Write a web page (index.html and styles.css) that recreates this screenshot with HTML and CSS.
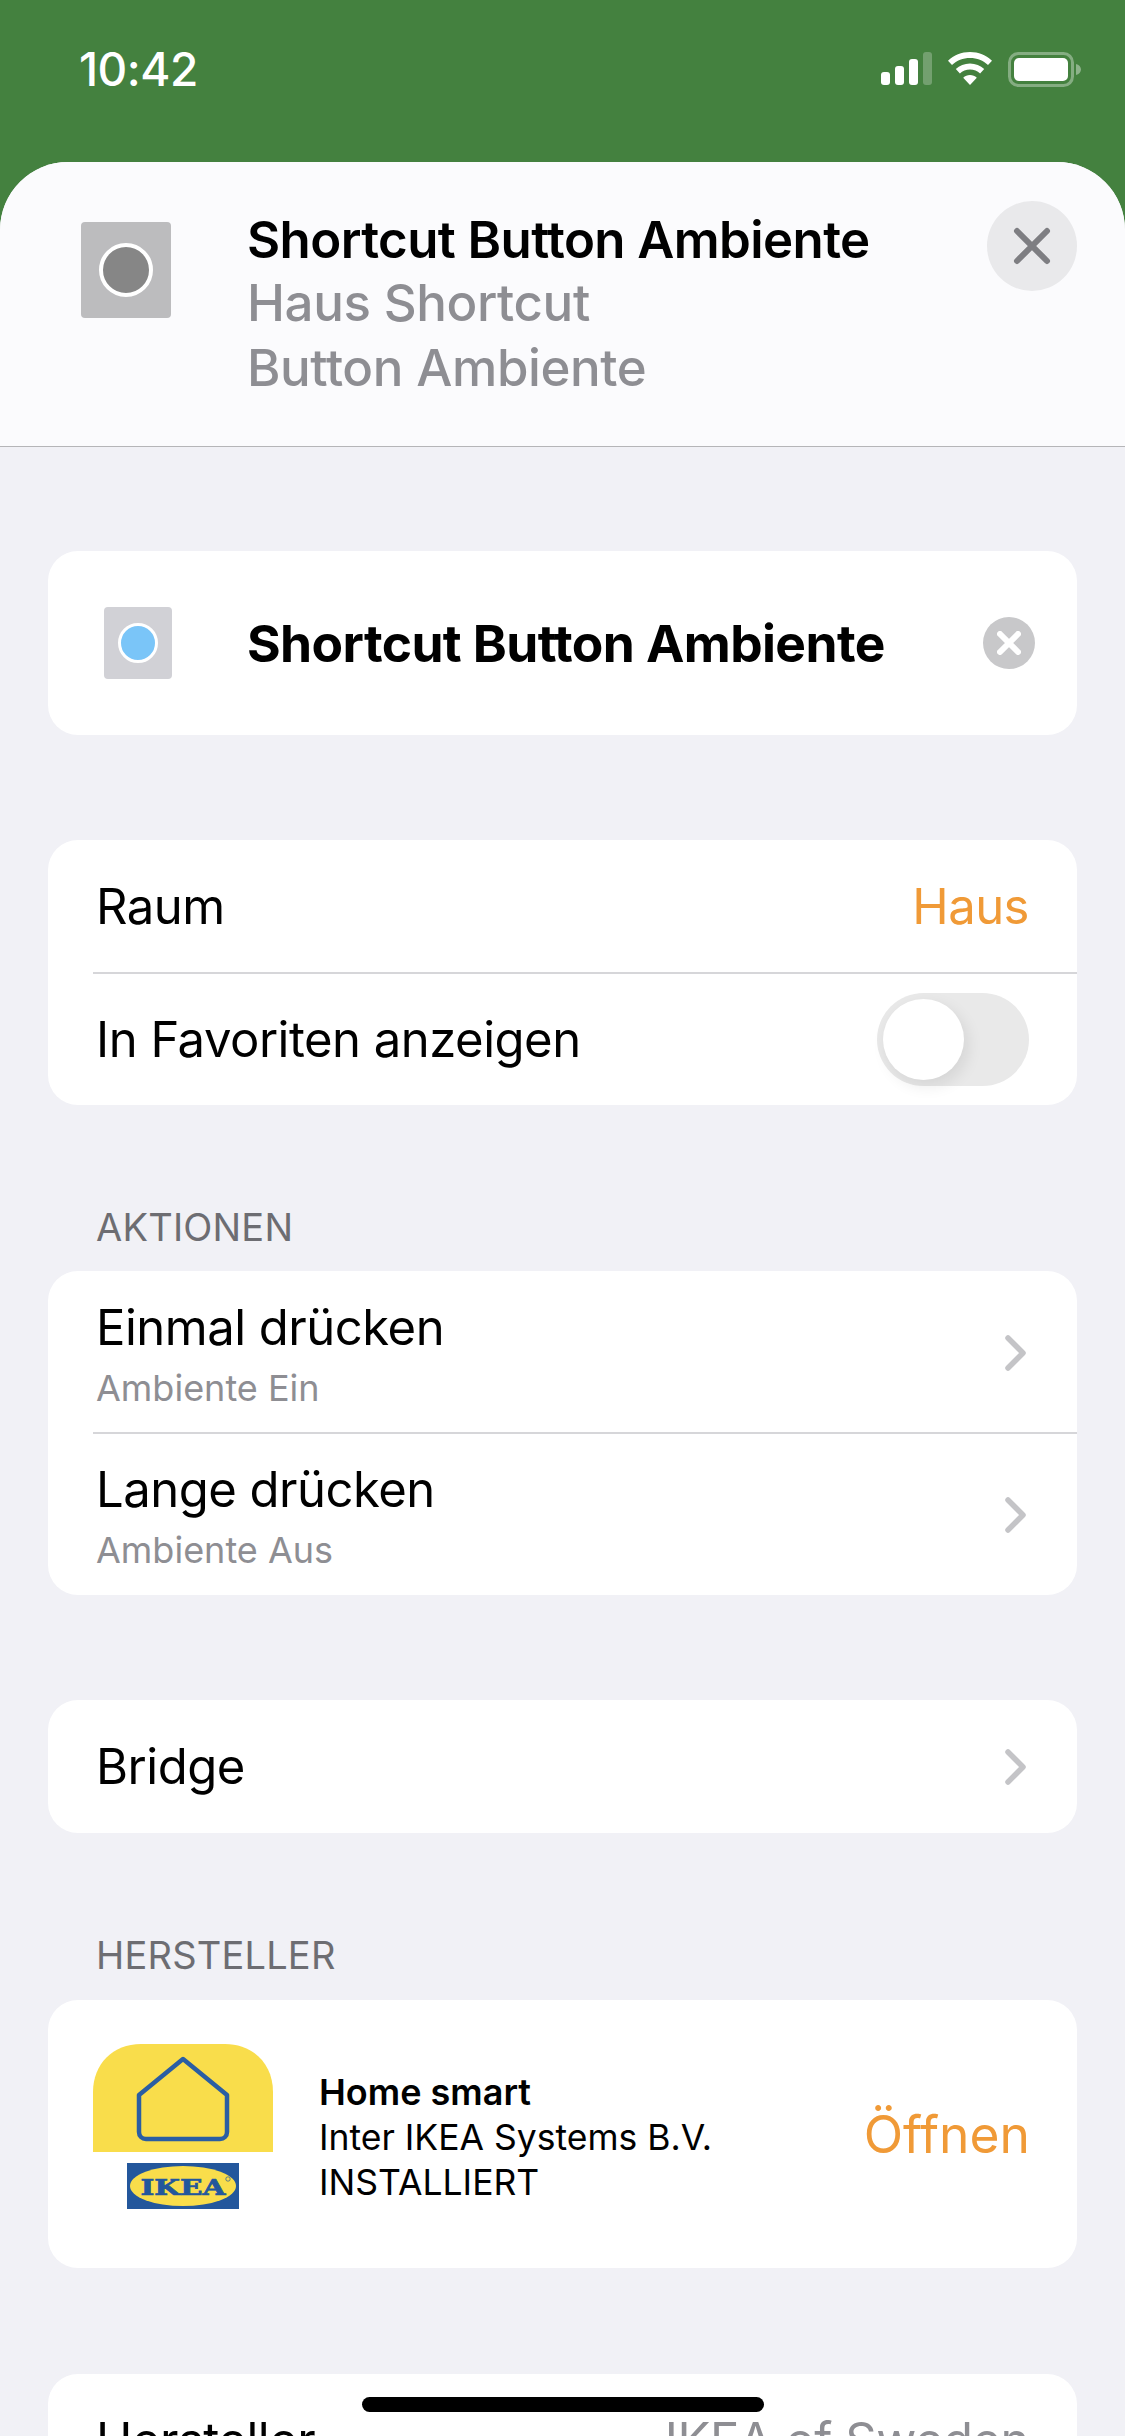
FILE: index.html
```html
<!DOCTYPE html>
<html lang="de">

<head>
    <meta charset="utf-8">
    <title>Shortcut Button Ambiente</title>
    <link rel="stylesheet" href="styles.css">
</head>

<body>
    <div class="screen">

        <header class="status-bar">
            <span class="time">10:42</span>
            <div class="status-icons">
                <svg class="signal" width="52" height="33" viewBox="0 0 52 33">
                    <rect x="0" y="20" width="9" height="13" rx="3" fill="#fff" />
                    <rect x="14" y="14" width="9" height="19" rx="3" fill="#fff" />
                    <rect x="28" y="7" width="9" height="26" rx="3" fill="#fff" />
                    <rect x="42" y="0" width="9" height="33" rx="3" fill="#fff" opacity="0.25" />
                </svg>
                <svg class="wifi" width="46" height="34" viewBox="0 0 46 34">
                    <path d="M23 0C14.500 0 6.800 3.300 1 8.700L5 13C9.700 8.600 16 6 23 6s13.300 2.600 18 7l4-4.300C39.200 3.300 31.500 0 23 0z" fill="#fff" />
                    <path d="M23 11.500c-5.500 0-10.500 2.100-14.200 5.600l4.100 4.400C15.500 19 19.100 17.500 23 17.500s7.500 1.500 10.100 4l4.100-4.400C33.500 13.600 28.500 11.500 23 11.500z" fill="#fff" />
                    <path d="M23 23c-2.600 0-5 1-6.800 2.700L23 33l6.800-7.300C28 24 25.600 23 23 23z" fill="#fff" />
                </svg>
                <svg class="battery" width="74" height="35" viewBox="0 0 74 35">
                    <rect x="1.500" y="1.500" width="63" height="32" rx="9" fill="none" stroke="#fff" stroke-width="3" opacity="0.35" />
                    <rect x="6" y="6" width="54" height="23" rx="5" fill="#fff" />
                    <path d="M68 12c3 .8 5 3 5 5.500S71 22.200 68 23z" fill="#fff" opacity="0.4" />
                </svg>
            </div>
        </header>

        <div class="sheet">

            <div class="sheet-head">
                <div class="tile tile-large"><span class="dot dot-large"></span></div>
                <div class="sheet-titles">
                    <div class="sheet-title">Shortcut Button Ambiente</div>
                    <div class="sheet-sub">Haus Shortcut<br>Button Ambiente</div>
                </div>
                <button class="close-btn">
                    <svg width="38" height="38" viewBox="0 0 38 38">
                        <path d="M4 4l30 30M34 4L4 34" stroke="#7e7e82" stroke-width="6" stroke-linecap="round" />
                    </svg>
                </button>
            </div>

            <main class="content">

                <section class="card name-card">
                    <div class="tile tile-small"><span class="dot dot-small"></span></div>
                    <div class="name-text">Shortcut Button Ambiente</div>
                    <span class="clear-btn">
                        <svg width="24" height="24" viewBox="0 0 24 24">
                            <path d="M3 3l18 18M21 3L3 21" stroke="#fff" stroke-width="6" stroke-linecap="round" />
                        </svg>
                    </span>
                </section>

                <section class="card group-room">
                    <div class="row">
                        <span>Raum</span>
                        <span class="orange">Haus</span>
                    </div>
                    <div class="row">
                        <span>In Favoriten anzeigen</span>
                        <span class="toggle"><span class="knob"></span></span>
                    </div>
                </section>

                <h2 class="section-label label-actions">AKTIONEN</h2>
                <section class="card">
                    <div class="row row-tall">
                        <div>
                            <div>Einmal drücken</div>
                            <div class="row-sub">Ambiente Ein</div>
                        </div>
                        <svg class="chevron" width="24" height="38" viewBox="0 0 24 38">
                            <path d="M4 4l15 15L4 34" fill="none" stroke="#c4c4c7" stroke-width="5.500" stroke-linecap="round" stroke-linejoin="round" />
                        </svg>
                    </div>
                    <div class="row row-tall">
                        <div>
                            <div>Lange drücken</div>
                            <div class="row-sub">Ambiente Aus</div>
                        </div>
                        <svg class="chevron" width="24" height="38" viewBox="0 0 24 38">
                            <path d="M4 4l15 15L4 34" fill="none" stroke="#c4c4c7" stroke-width="5.500" stroke-linecap="round" stroke-linejoin="round" />
                        </svg>
                    </div>
                </section>

                <section class="card group-bridge">
                    <div class="row">
                        <span>Bridge</span>
                        <svg class="chevron" width="24" height="38" viewBox="0 0 24 38">
                            <path d="M4 4l15 15L4 34" fill="none" stroke="#c4c4c7" stroke-width="5.500" stroke-linecap="round" stroke-linejoin="round" />
                        </svg>
                    </div>
                </section>

                <h2 class="section-label label-maker">HERSTELLER</h2>
                <section class="card app-card">
                    <div class="app-logo">
                        <svg class="app-icon" width="180" height="108" viewBox="0 0 180 108">
                            <path d="M0 108V48C0 20 20 0 48 0h84c28 0 48 20 48 48v60z" fill="#f9dd4b" />
                            <path d="M90 15L46 51v37c0 4 3 7 7 7h74c4 0 7-3 7-7V51z" fill="none" stroke="#2a5ea3" stroke-width="4.500" stroke-linejoin="round" />
                        </svg>
                        <svg class="ikea" width="112" height="46" viewBox="0 0 112 46">
                            <rect width="112" height="46" fill="#23579c" />
                            <ellipse cx="56" cy="23" rx="53" ry="20" fill="#f9dd4b" />
                            <text x="56" y="31.500" text-anchor="middle" textLength="85" lengthAdjust="spacingAndGlyphs" class="ikea-text">IKEA</text>
                            <circle cx="101" cy="16" r="2.200" fill="none" stroke="#23579c" stroke-width="0.700" />
                        </svg>
                    </div>
                    <div class="app-text">
                        <div class="app-name">Home smart</div>
                        <div>Inter IKEA Systems B.V.</div>
                        <div>INSTALLIERT</div>
                    </div>
                    <span class="orange app-open">Öffnen</span>
                </section>

                <section class="card group-last">
                    <div class="row">
                        <span>Hersteller</span>
                        <span class="grey">IKEA of Sweden</span>
                    </div>
                </section>

            </main>
        </div>

        <div class="home-bar"></div>
    </div>
</body>

</html>
```

FILE: styles.css
```css
* {
    box-sizing: border-box;
}

html,
body {
    margin: 0;
    padding: 0;
}

body {
    font-family: Inter, "Liberation Sans", sans-serif;
    color: #000;
}

.screen {
    position: relative;
    width: 1125px;
    height: 2436px;
    overflow: hidden;
    background: #44813f;
}

/* status bar */
.status-bar {
    height: 162px;
    display: flex;
    justify-content: space-between;
    align-items: flex-start;
    padding: 43px 43px 0 79px;
    color: #fff;
}

.time {
    font-size: 46px;
    font-weight: 500;
    line-height: 53px;
    letter-spacing: -0.5px;
}

.status-icons {
    display: flex;
    align-items: flex-start;
    padding-top: 9px;
}

.signal {
    margin-right: 14px;
}

.wifi {
    margin-right: 15px;
}

/* sheet */
.sheet {
    height: 2274px;
    background: #f1f1f6;
    border-radius: 68px 68px 0 0;
    overflow: hidden;
}

.sheet-head {
    height: 285px;
    background: #fbfbfd;
    border-bottom: 1px solid #b5b5b8;
    display: flex;
    align-items: flex-start;
    padding: 39px 48px 0 81px;
}

.tile {
    flex: none;
    display: flex;
    align-items: center;
    justify-content: center;
    border-radius: 4px;
}

.tile-large {
    width: 90px;
    height: 96px;
    margin-top: 21px;
    background: #bcbcbe;
}

.tile-small {
    width: 68px;
    height: 72px;
    background: #d1d1d6;
}

.dot {
    display: block;
    border-radius: 50%;
    border-style: solid;
    border-color: #fff;
}

.dot-large {
    width: 54px;
    height: 54px;
    border-width: 4px;
    background: #868686;
}

.dot-small {
    width: 40px;
    height: 40px;
    border-width: 3px;
    background: #7ac5f8;
}

.sheet-titles {
    flex: 1;
    margin-left: 76px;
}

.sheet-title {
    font-size: 51px;
    font-weight: 600;
    line-height: 61px;
    margin-top: 8px;
    letter-spacing: -0.6px;
}

.sheet-sub {
    font-size: 51px;
    font-weight: 500;
    line-height: 65px;
    color: #8e8e93;
    letter-spacing: -0.4px;
}

.close-btn {
    flex: none;
    width: 90px;
    height: 90px;
    border: 0;
    padding: 0;
    border-radius: 50%;
    background: #e9e9eb;
    display: flex;
    align-items: center;
    justify-content: center;
}

/* content */
.content {
    padding: 104px 48px 0 48px;
}

.card {
    background: #fff;
    border-radius: 30px;
    overflow: hidden;
}

.name-card {
    height: 184px;
    display: flex;
    align-items: center;
    padding: 0 42px 0 56px;
}

.name-text {
    flex: 1;
    margin-left: 75px;
    font-size: 51.500px;
    font-weight: 700;
    letter-spacing: -0.6px;
}

.clear-btn {
    flex: none;
    width: 52px;
    height: 52px;
    border-radius: 50%;
    background: #c8c8ca;
    display: flex;
    align-items: center;
    justify-content: center;
}

.group-room {
    margin-top: 105px;
}

.row {
    height: 132px;
    margin-left: 45px;
    padding: 0 48px 0 3px;
    display: flex;
    align-items: center;
    justify-content: space-between;
    font-size: 49px;
    letter-spacing: -0.5px;
}

.row + .row {
    height: 133px;
    border-top: 2px solid #d6d6d9;
}

.row.row-tall {
    height: 161px;
    padding-top: 3px;
}

.row.row-tall + .row-tall {
    height: 163px;
    padding-bottom: 2px;
}

.row-sub {
    font-size: 36px;
    line-height: 42px;
    margin-top: 10px;
    color: #8e8e93;
    letter-spacing: 0;
}

.orange {
    color: #f09a37;
}

.grey {
    color: #8e8e93;
}

.toggle {
    position: relative;
    display: block;
    width: 152px;
    height: 93px;
    border-radius: 47px;
    background: #e9e9e9;
}

.knob {
    position: absolute;
    top: 6px;
    left: 6px;
    width: 81px;
    height: 81px;
    border-radius: 50%;
    background: #fff;
    box-shadow: 4px 6px 16px rgba(0, 0, 0, 0.09);
}

.chevron {
    margin-right: 1px;
}

.section-label {
    margin: 0;
    padding-left: 48px;
    font-size: 38px;
    font-weight: 400;
    line-height: 45px;
    color: #6d6d72;
    letter-spacing: 0.2px;
}

.label-actions {
    margin-top: 100px;
    margin-bottom: 21px;
}

.label-maker {
    margin-top: 100px;
    margin-bottom: 22px;
}

.group-bridge {
    margin-top: 105px;
}

.group-bridge .row {
    height: 133px;
}

.app-card {
    height: 268px;
    display: flex;
    align-items: flex-start;
    padding: 44px 47px 0 45px;
}

.app-logo {
    flex: none;
    width: 180px;
    display: flex;
    flex-direction: column;
    align-items: center;
    gap: 11px;
}

.app-icon,
.ikea {
    display: block;
}

.ikea-text {
    font-family: "DejaVu Serif", serif;
    font-size: 23px;
    font-weight: 700;
    fill: #23579c;
    stroke: #23579c;
    stroke-width: 0.7px;
}

.app-text {
    flex: 1;
    margin-left: 46px;
    padding-top: 26px;
    font-size: 35.500px;
    line-height: 45px;
}

.app-name {
    font-size: 36px;
    font-weight: 600;
}

.app-open {
    align-self: center;
    margin-top: -45px;
    font-size: 51.500px;
}

.group-last {
    margin-top: 106px;
}

/* home indicator */
.home-bar {
    position: absolute;
    left: 362px;
    top: 2397px;
    width: 402px;
    height: 15px;
    border-radius: 8px;
    background: #000;
}
```
